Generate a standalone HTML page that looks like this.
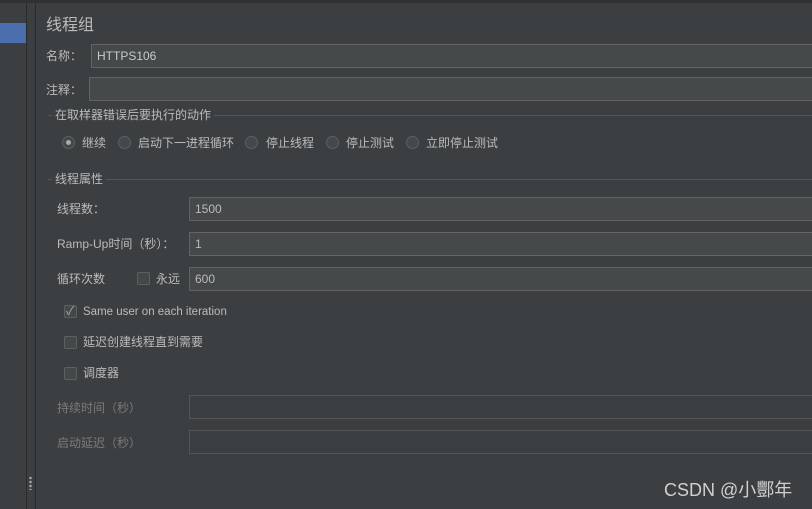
<!DOCTYPE html>
<html><head><meta charset="utf-8"><style>
body{margin:0;width:812px;height:509px;background:#3c3f41;overflow:hidden;position:relative;font-family:"Liberation Sans","Noto Sans CJK SC",sans-serif;font-size:12px;color:#bbbbbb}
.a{position:absolute;white-space:nowrap;line-height:14px}
.f{position:absolute;background:#45494a;border:1px solid #646464;box-sizing:border-box;height:24px;right:-2px;padding-left:5px;line-height:23px;color:#bbbbbb}
.r{position:absolute;width:13px;height:13px;border-radius:50%;border:1px solid #5e6060;background:#43494a;box-sizing:border-box}
.c{position:absolute;width:13px;height:13px;border:1px solid #5e6060;background:#43494a;box-sizing:border-box;border-radius:2px}
.d{color:#7a7a7a}
</style></head><body>
<div class="a" style="left:0;top:0;width:812px;height:3px;background:#2f3133"></div>
<div class="a" style="left:0;top:23px;width:26px;height:20px;background:#4b6eaf"></div>
<div class="a" style="left:26px;top:3px;width:1px;height:506px;background:#2b2b2b"></div>
<div class="a" style="left:35px;top:3px;width:1px;height:506px;background:#2b2b2b"></div>
<div class="a" style="left:29px;top:476px;width:3px;height:14px;background:radial-gradient(circle,#aaa 1px,transparent 1.5px) 0 0/3px 4px"></div>
<div class="a" style="left:46px;top:16px;font-size:16px;line-height:20px;color:#bbb">线程组</div>
<div class="a" style="left:46px;top:49px">名称：</div>
<div class="f" style="left:91px;top:44px;color:#c5ccd0">HTTPS106</div>
<div class="a" style="left:46px;top:83px">注释：</div>
<div class="f" style="left:89px;top:77px;height:24px"></div>
<div class="a" style="left:48px;top:115px;width:770px;height:1px;background:#555"></div>
<div class="a" style="left:52px;top:108px;background:#3c3f41;padding:0 3px">在取样器错误后要执行的动作</div>
<div class="r" style="left:62px;top:136px"><div style="position:absolute;left:3px;top:3px;width:5px;height:5px;border-radius:50%;background:#aaa"></div></div>
<div class="a" style="left:82px;top:136px">继续</div>
<div class="r" style="left:118px;top:136px"></div><div class="a" style="left:138px;top:136px">启动下一进程循环</div>
<div class="r" style="left:245px;top:136px"></div><div class="a" style="left:266px;top:136px">停止线程</div>
<div class="r" style="left:326px;top:136px"></div><div class="a" style="left:346px;top:136px">停止测试</div>
<div class="r" style="left:406px;top:136px"></div><div class="a" style="left:426px;top:136px">立即停止测试</div>
<div class="a" style="left:48px;top:179px;width:770px;height:1px;background:#555"></div>
<div class="a" style="left:52px;top:172px;background:#3c3f41;padding:0 3px">线程属性</div>
<div class="a" style="left:57px;top:202px">线程数：</div>
<div class="f" style="left:189px;top:197px">1500</div>
<div class="a" style="left:57px;top:237px">Ramp-Up时间（秒）：</div>
<div class="f" style="left:189px;top:232px">1</div>
<div class="a" style="left:57px;top:272px">循环次数</div>
<div class="c" style="left:137px;top:272px"></div><div class="a" style="left:156px;top:272px">永远</div>
<div class="f" style="left:189px;top:267px">600</div>
<div class="c" style="left:64px;top:305px"><span style="position:absolute;left:1px;top:-2px;font-size:12px;color:#aaa;line-height:14px">✓</span></div>
<div class="a" style="left:83px;top:305px;font-size:11.5px">Same user on each iteration</div>
<div class="c" style="left:64px;top:336px"></div><div class="a" style="left:83px;top:335px">延迟创建线程直到需要</div>
<div class="c" style="left:64px;top:367px"></div><div class="a" style="left:83px;top:366px">调度器</div>
<div class="a d" style="left:57px;top:401px">持续时间（秒）</div>
<div class="f" style="left:189px;top:395px;background:#3c3f41;border-color:#555"></div>
<div class="a d" style="left:57px;top:436px">启动延迟（秒）</div>
<div class="f" style="left:189px;top:430px;background:#3c3f41;border-color:#555"></div>
<div class="a" style="left:664px;top:480px;font-size:18px;line-height:20px;color:#d0d0d0">CSDN @小酆年</div>
</body></html>
